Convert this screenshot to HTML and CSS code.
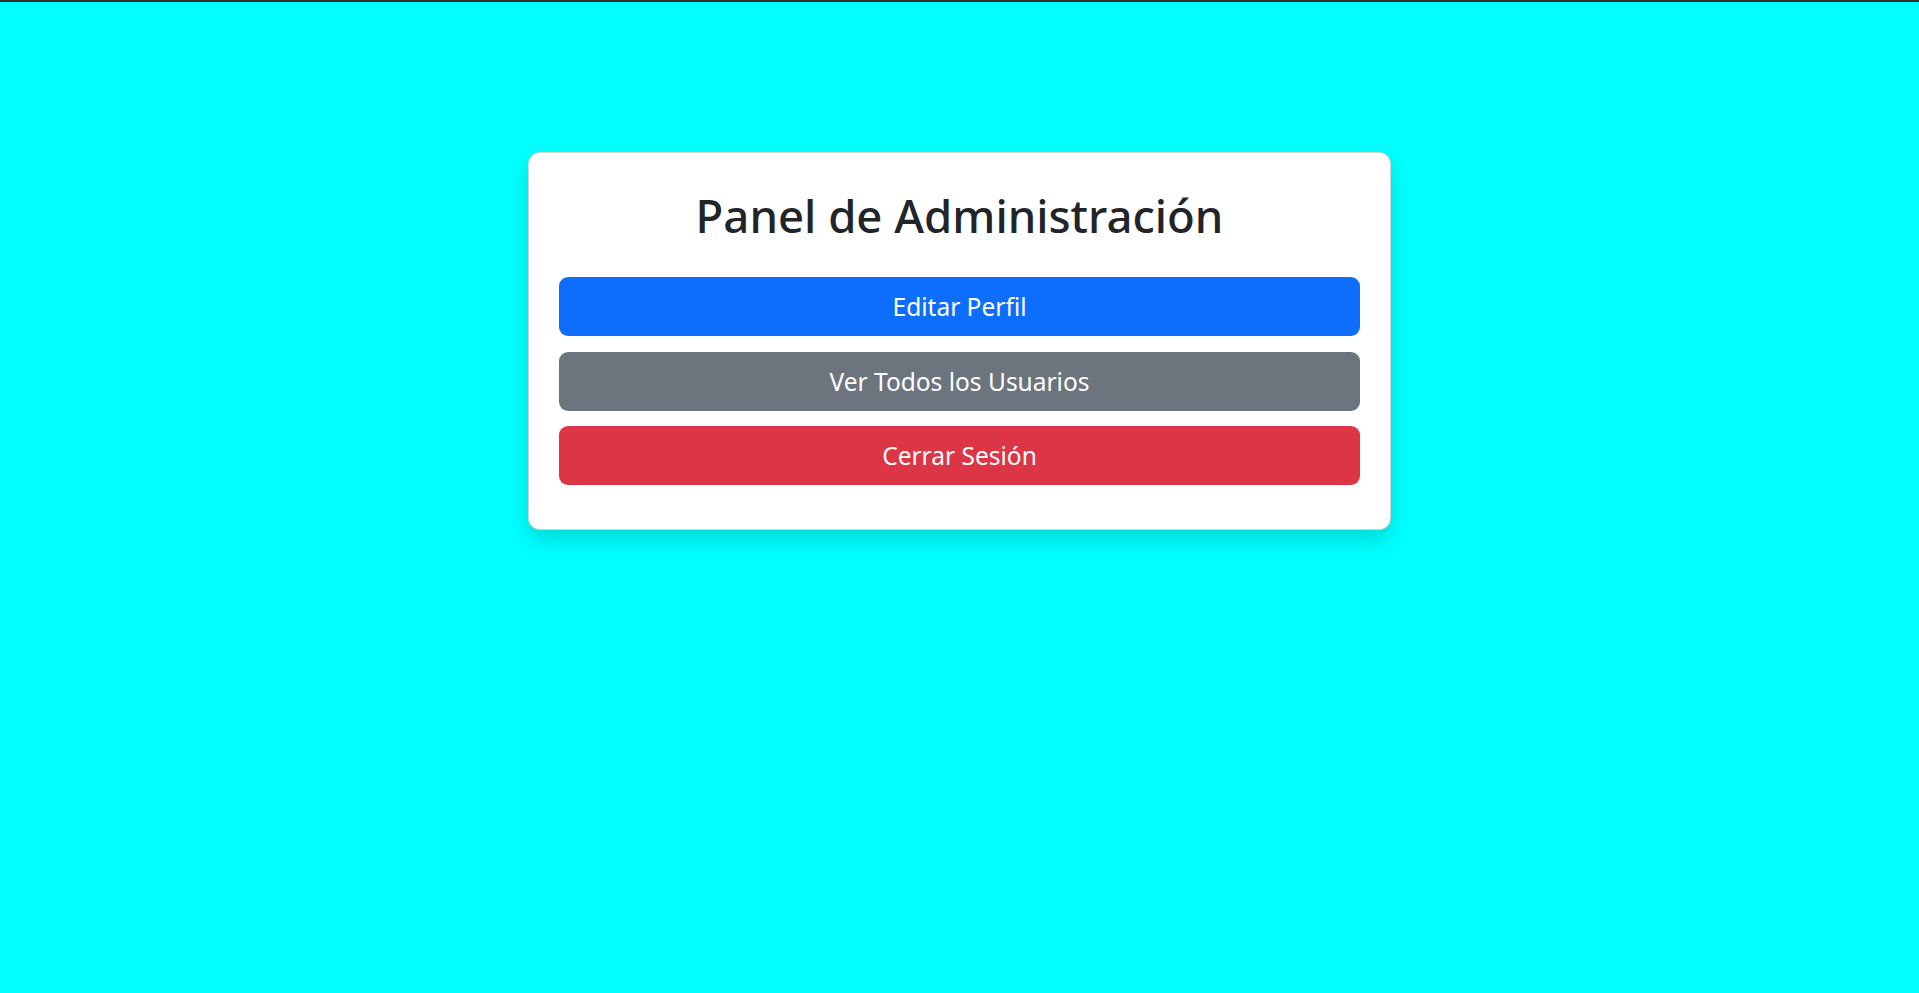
FILE: index.html
```html
<!DOCTYPE html>
<html lang="es">
<head>
<meta charset="utf-8">
<title>Panel de Administración</title>
<link rel="stylesheet" href="styles.css">
</head>
<body>
<div class="topline"></div>
<main class="page">
  <section class="card">
    <h1 class="title">Panel de Administración</h1>
    <div class="actions">
      <a class="btn btn-primary" href="#">Editar Perfil</a>
      <a class="btn btn-secondary" href="#">Ver Todos los Usuarios</a>
      <a class="btn btn-danger" href="#">Cerrar Sesión</a>
    </div>
  </section>
</main>
</body>
</html>
```

FILE: styles.css
```css
html, body {
  margin: 0;
  padding: 0;
  height: 100%;
}
body {
  background: #00ffff;
  font-family: "Noto Sans", "Open Sans", sans-serif;
  color: #212529;
}
.topline {
  height: 2px;
  background: #2e2e2e;
}
.page {
  display: flex;
  justify-content: center;
  padding-top: 150px;
}
.card {
  width: 863px;
  box-sizing: border-box;
  background: #fff;
  border: 1px solid rgba(0, 0, 0, 0.175);
  border-radius: 12px;
  box-shadow: 0 10px 20px rgba(0, 0, 0, 0.15);
  padding: 30px 30px 29px;
}
.title {
  margin: 0 0 30px;
  text-align: center;
  font-size: 45.5px;
  font-weight: 500;
  line-height: 64px;
}
.actions {
  display: flex;
  flex-direction: column;
  gap: 15.5px;
  padding-bottom: 15px;
}
.btn {
  display: block;
  height: 59px;
  box-sizing: border-box;
  border-radius: 9px;
  color: #fff;
  text-decoration: none;
  text-align: center;
  font-size: 24.5px;
  line-height: 59px;
}
.btn-primary { background: #0d6efd; }
.btn-secondary { background: #6c757d; }
.btn-danger { background: #dc3545; }
```
